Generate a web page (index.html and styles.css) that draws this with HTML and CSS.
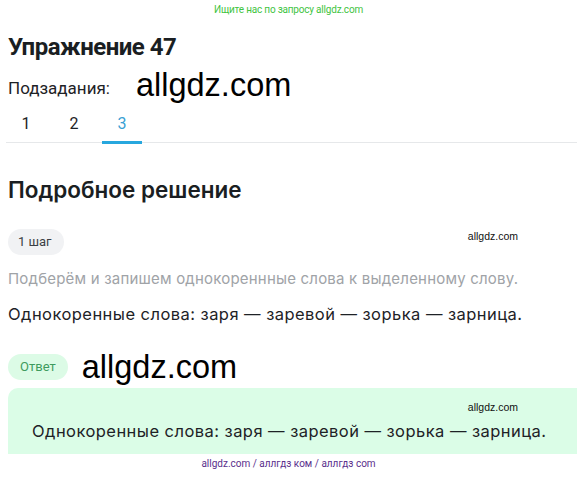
FILE: index.html
```html
<!DOCTYPE html>
<html lang="ru">
<head>
<meta charset="utf-8">
<link rel="stylesheet" href="styles.css">
</head>
<body>
<div class="top-note">Ищите нас по запросу allgdz.com</div>
<main class="page">
  <h1 class="title">Упражнение 47</h1>
  <div class="subtasks">
    <span class="subtasks-label">Подзадания:</span>
    <span class="wm-big">allgdz.com</span>
  </div>
  <nav class="tabs">
    <span class="tab">1</span>
    <span class="tab">2</span>
    <span class="tab active">3</span>
  </nav>
  <h2 class="section-title">Подробное решение</h2>
  <div class="step-row">
    <span class="pill pill-step">1 шаг</span>
    <span class="wm-small">allgdz.com</span>
  </div>
  <p class="hint">Подберём и запишем однокореннные слова к выделенному слову.</p>
  <p class="body-text">Однокоренные слова: заря — заревой — зорька — зарница.</p>
  <div class="answer-row">
    <span class="pill pill-answer">Ответ</span>
    <span class="wm-big">allgdz.com</span>
  </div>
  <div class="answer-box">
    <div class="answer-wm"><span class="wm-small">allgdz.com</span></div>
    <p class="answer-text">Однокоренные слова: заря — заревой — зорька — зарница.</p>
  </div>
  <div class="footer-note">allgdz.com / аллгдз ком / аллгдз com</div>
</main>
</body>
</html>
```
FILE: styles.css
```css
* { box-sizing: border-box; }
html, body { margin: 0; padding: 0; background: #fff; }
body { font-family: "Inter", "Roboto", sans-serif; color: #1e2226; }

.top-note {
  text-align: center;
  font-family: "Roboto", sans-serif;
  font-size: 10px;
  color: #3fc43f;
  padding-top: 4px;
  height: 16px;
  letter-spacing: -0.2px;
}

.page { padding-left: 8px; }

.title {
  margin: 17px 0 0;
  font-family: "Roboto", sans-serif;
  font-weight: 700;
  font-size: 24px;
  line-height: 28px;
  color: #1a1e22;
  letter-spacing: -0.5px;
}

.subtasks {
  display: flex;
  align-items: center;
  margin-top: 6px;
  height: 36px;
}
.subtasks-label {
  font-family: "Roboto", sans-serif;
  font-size: 17px;
  color: #1e2226;
  margin-top: 6px;
}
.wm-big {
  font-family: "Liberation Sans", Arial, sans-serif;
  font-size: 32.5px;
  color: #000;
  margin-left: 26px;
  line-height: 36px;
}

.tabs {
  display: flex;
  gap: 8px;
  margin-left: -2px;
  margin-top: 4px;
  border-bottom: 1px solid #e6e8ea;
  height: 36px;
}
.tab {
  width: 40px;
  text-align: center;
  font-family: "Roboto", sans-serif;
  font-size: 16px;
  line-height: 20px;
  padding-top: 7px;
  color: #1e2226;
}
.tab.active {
  color: #3a9fd4;
  border-bottom: 3px solid #27a7de;
  margin-bottom: -2px;
}

.section-title {
  margin: 33px 0 0;
  font-family: "Inter", sans-serif;
  font-weight: 600;
  font-size: 22.5px;
  line-height: 28px;
  color: #1a1e22;
}

.step-row {
  display: flex;
  align-items: flex-start;
  justify-content: space-between;
  margin-top: 25px;
  padding-right: 59px;
}
.pill {
  display: inline-block;
  height: 26px;
  line-height: 26px;
  border-radius: 13px;
  padding: 0 10px;
  font-family: "Roboto", sans-serif;
  font-size: 13px;
}
.pill-step { background: #f1f2f4; color: #3a3f44; padding: 0 12px 0 10px; }
.wm-small {
  font-family: "Liberation Sans", Arial, sans-serif;
  font-size: 10.5px;
  color: #111;
  margin-top: 1px;
}

.hint {
  margin: 14px 0 0;
  font-size: 15px;
  letter-spacing: 0.2px;
  line-height: 20px;
  color: #a0a3a7;
}
.body-text {
  margin: 14px 0 0;
  font-size: 16.5px;
  letter-spacing: 0.45px;
  line-height: 22px;
  color: #1e2226;
}

.answer-row {
  display: flex;
  align-items: center;
  margin-top: 26px;
  height: 32px;
}
.pill-answer { background: #dcfbe6; color: #3e9b5e; padding: 0 12px; font-size: 13px; }
.answer-row .wm-big { margin-left: 14px; }

.answer-box {
  background: #dbfde7;
  border-radius: 10px 0 0 0;
  margin-top: 5px;
  padding: 12px 0 10px 24px;
  height: 66px;
}
.answer-wm {
  display: flex;
  justify-content: flex-end;
  padding-right: 59px;
  height: 14px;
}
.answer-text {
  margin: 6px 0 0;
  font-size: 16.5px;
  letter-spacing: 0.45px;
  line-height: 22px;
  color: #1e2226;
}

.footer-note {
  text-align: center;
  font-family: "Roboto", sans-serif;
  font-size: 10px;
  color: #5a2f8c;
  margin-top: 4px;
  padding-right: 8px;
}
```
